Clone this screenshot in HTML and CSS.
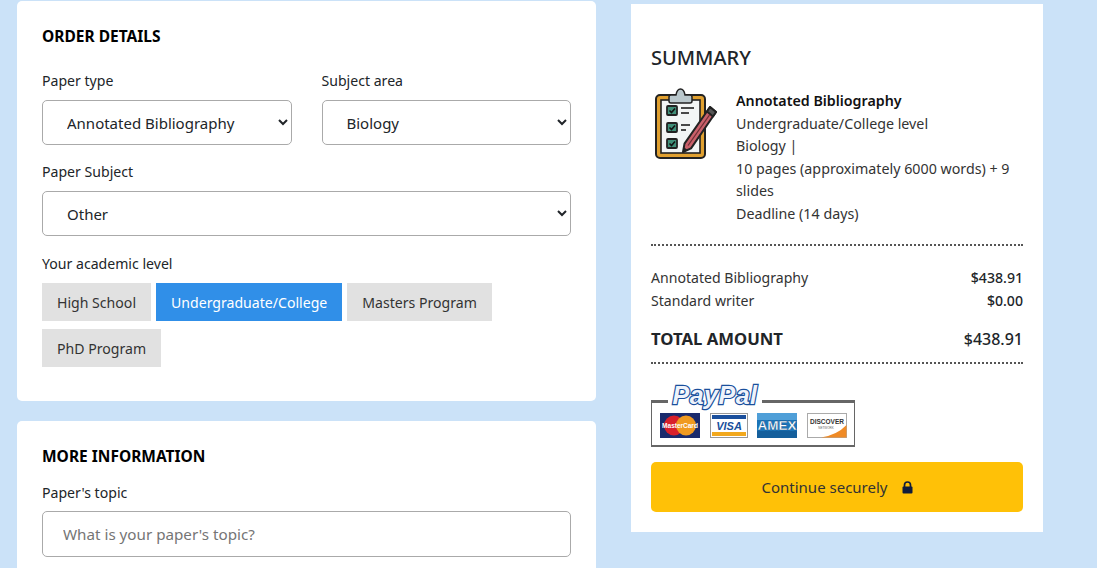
FILE: index.html
```html
<!DOCTYPE html>
<html lang="en">
<head>
<meta charset="utf-8">
<title>Order</title>
<link rel="stylesheet" href="styles.css">
</head>
<body>
<main class="page">
  <div class="left">
    <section class="card details">
      <h2 class="card-title">ORDER DETAILS</h2>
      <div class="row">
        <div class="field">
          <label class="label">Paper type</label>
          <select class="select"><option>Annotated Bibliography</option></select>
        </div>
        <div class="field">
          <label class="label">Subject area</label>
          <select class="select"><option>Biology</option></select>
        </div>
      </div>
      <div class="field subject">
        <label class="label">Paper Subject</label>
        <select class="select"><option>Other</option></select>
      </div>
      <div class="field">
        <span class="label">Your academic level</span>
        <div class="levels">
          <button class="level">High School</button>
          <button class="level active">Undergraduate/College</button>
          <button class="level">Masters Program</button>
          <button class="level">PhD Program</button>
        </div>
      </div>
    </section>
    <section class="card info">
      <h2 class="card-title">MORE INFORMATION</h2>
      <label class="label">Paper's topic</label>
      <input class="input" type="text" placeholder="What is your paper's topic?">
    </section>
  </div>
  <aside class="summary">
    <h2 class="summary-title">SUMMARY</h2>
    <div class="order">
      <svg class="clipboard" viewBox="0 0 66 72" width="66" height="72" aria-hidden="true">
        <rect x="2" y="7" width="49" height="63" rx="4" fill="#e0a030" stroke="#222" stroke-width="2"/>
        <rect x="7" y="12" width="39" height="53" fill="#f2f5f5" stroke="#222" stroke-width="1.6"/>
        <path d="M15 13 v-4 q0-2 2-2 h5 q1-6 4.500-6 q3.500 0 4.500 6 h5 q2 0 2 2 v4 q0 2-2 2 h-19 q-2 0-2-2z" fill="#b9c7cc" stroke="#222" stroke-width="1.5"/>
        <g fill="#3f8f78" stroke="#222" stroke-width="1.8">
          <rect x="13" y="18" width="10" height="9" rx="1"/>
          <rect x="13" y="35" width="10" height="9" rx="1"/>
          <rect x="13" y="51" width="10" height="9" rx="1"/>
        </g>
        <g fill="none" stroke="#111" stroke-width="1.6">
          <path d="M15.500 22.500l2 2 3.500-4M15.500 39.500l2 2 3.500-4M15.500 55.500l2 2 3.500-4"/>
          <path d="M27 20h13M27 25h8M27 37h9M27 42h5"/>
        </g>
        <path d="M56 19 L62 24 L37 60.400 L29 64 L30.500 55.600z" fill="#c9606a" stroke="#222" stroke-width="2" stroke-linejoin="round"/>
        <path d="M56 19 L62 24 L59 28.500 L53 23.500z" fill="#555" stroke="#222" stroke-width="2" stroke-linejoin="round"/>
        <path d="M55.500 27 L34 57.500" stroke="#6d2f36" stroke-width="1.300"/>
        <path d="M29 64l.7-5 3.800 3z" fill="#222"/>
      </svg>
      <div class="order-text">
        <strong>Annotated Bibliography</strong>
        <span>Undergraduate/College level</span>
        <span>Biology |</span>
        <span>10 pages (approximately 6000 words) + 9 slides</span>
        <span>Deadline (14 days)</span>
      </div>
    </div>
    <div class="prices">
      <div class="price"><span>Annotated Bibliography</span><b>$438.91</b></div>
      <div class="price"><span>Standard writer</span><b>$0.00</b></div>
    </div>
    <div class="total"><strong>TOTAL AMOUNT</strong><span>$438.91</span></div>
    <div class="paypal">
      <span class="pp-word">PayPal</span>
      <div class="pp-cards">
        <svg class="pp-card" width="40" height="25" viewBox="0 0 40 25" aria-hidden="true">
          <rect width="40" height="25" fill="#1a2a6c"/>
          <circle cx="14" cy="12.500" r="10" fill="#d8202a"/>
          <circle cx="26" cy="12.500" r="10" fill="#f09a20"/>
          <text x="20" y="15" font-size="6.500" font-weight="700" fill="#fff" text-anchor="middle" font-family="Liberation Sans">MasterCard</text>
        </svg>
        <svg class="pp-card" width="38" height="25" viewBox="0 0 38 25" aria-hidden="true">
          <rect x=".5" y=".5" width="37" height="24" fill="#fff" stroke="#999"/>
          <rect x="2" y="2" width="34" height="4" fill="#1a4f9c"/>
          <rect x="2" y="19" width="34" height="4" fill="#f2a81d"/>
          <text x="19" y="16.500" font-size="11" font-weight="700" font-style="italic" fill="#1a4f9c" text-anchor="middle" font-family="Liberation Sans">VISA</text>
        </svg>
        <svg class="pp-card" width="40" height="25" viewBox="0 0 40 25" aria-hidden="true">
          <rect width="40" height="25" fill="#1b74b8"/>
          <rect width="40" height="7" fill="#4f9fd8"/>
          <rect y="18" width="40" height="7" fill="#145f9c"/>
          <text x="20" y="17" font-size="13" font-weight="700" fill="#fff" stroke="#0e4a80" stroke-width=".3" text-anchor="middle" font-family="Liberation Sans" textLength="39" lengthAdjust="spacingAndGlyphs">AMEX</text>
        </svg>
        <svg class="pp-card" width="40" height="25" viewBox="0 0 40 25" aria-hidden="true">
          <rect x=".5" y=".5" width="39" height="24" fill="#fff" stroke="#aaa"/>
          <path d="M14 24.500 Q30 22 39.500 12 V24.500z" fill="#ef8a25"/>
          <text x="20" y="11" font-size="6.500" font-weight="700" fill="#333" text-anchor="middle" font-family="Liberation Sans">DISCOVER</text>
          <text x="19" y="15.500" font-size="3" fill="#666" text-anchor="middle" font-family="Liberation Sans">NETWORK</text>
        </svg>
      </div>
    </div>
    <button class="continue">Continue securely
      <svg class="lock" width="11" height="13" viewBox="0 0 11 13" aria-hidden="true">
        <path d="M2.500 6V4a3 3 0 0 1 6 0v2" fill="none" stroke="#101c3c" stroke-width="1.700"/>
        <rect x=".5" y="5.500" width="10" height="7" rx="1" fill="#101c3c"/>
      </svg>
    </button>
  </aside>
</main>
</body>
</html>
```

FILE: styles.css
```css
* { box-sizing: border-box; }
html, body { margin: 0; height: 568px; overflow: hidden; }
body { background: #cbe2f8; font-family: "Noto Sans", sans-serif; font-size: 14px; color: #212529; }
.page { display: flex; align-items: flex-start; padding-left: 17px; gap: 35px; height: 568px; overflow: hidden; }
.left { width: 579px; flex: none; display: flex; flex-direction: column; gap: 20px; padding-top: 1px; }
.card { background: #fff; border-radius: 5px; padding: 25px 25px 0; }
.details { height: 400px; }
.info { height: 160px; flex: none; }
.card-title { margin: 0 0 25px; font-size: 15.500px; line-height: 20px; font-weight: 700; color: #000; }
.row { display: flex; gap: 30px; }
.row .field { flex: 1; }
.field { margin-bottom: 17px; }
.subject { margin-bottom: 18px; }
.label { display: block; font-size: 14.100px; line-height: 20px; margin-bottom: 9px; color: #212529; }
.select { display: block; width: 100%; height: 45px; border: 1px solid #aaa; border-radius: 5px; background: #fff; padding: 0 20px; font: 15px "Noto Sans", sans-serif; color: #212529; }
.levels { display: flex; flex-wrap: wrap; gap: 8px 5px; }
.level { border: 0; background: #e1e1e1; height: 38px; padding: 0 15px; font: 14.100px "Noto Sans", sans-serif; color: #333; }
.level.active { background: #308fe8; color: #fff; }
.info .card-title { margin-bottom: 17px; }
.info .label { margin-bottom: 8px; }
.input { display: block; width: 100%; height: 46px; border: 1px solid #aaa; border-radius: 5px; padding: 0 20px; font: 15.200px "Noto Sans", sans-serif; }
.input::placeholder { color: #757575; }
.summary { width: 412px; flex: none; margin-top: 4px; height: 528px; background: #fff; padding: 40px 20px 0; }
.summary-title { margin: 0 0 18px; font-size: 20px; line-height: 28px; font-weight: 500; color: #212529; }
.order { display: flex; gap: 16px; padding-bottom: 19px; border-bottom: 2px dotted #555; }
.clipboard { flex: none; margin: -2px 0 0 3px; }
.order-text { font-size: 14.250px; line-height: 22.500px; display: flex; flex-direction: column; color: #333; }
.order-text strong { font-weight: 600; color: #111; }
.prices { padding-top: 20px; font-size: 14.100px; line-height: 23px; }
.price { display: flex; justify-content: space-between; color: #333; }
.price b { font-weight: 500; color: #212529; }
.total { display: flex; justify-content: space-between; align-items: center; margin-top: 15px; padding-bottom: 11px; border-bottom: 2px dotted #555; font-size: 16px; line-height: 24px; }
.total strong { font-weight: 700; font-size: 16.700px; }
.total span { font-weight: 500; }
.paypal { position: relative; width: 204px; height: 47px; margin-top: 36px; border: 2px solid #666; border-top-width: 3px; border-left-width: 1px; border-right-width: 1px; background: #fff; }
.pp-word { position: absolute; top: -20px; left: 16px; width: 94px; height: 24px; text-align: center; background: #fff; font: italic 700 25px/24px "Liberation Sans", sans-serif; color: #eef3fb; -webkit-text-stroke: 2.400px #1a4f9c; paint-order: stroke fill; letter-spacing: .5px; }
.pp-cards { display: flex; justify-content: space-between; padding: 10px 7px 0 8px; }
.pp-card { display: block; }
.continue { display: flex; align-items: center; justify-content: center; gap: 14px; width: 100%; height: 50px; margin-top: 15px; border: 0; border-radius: 5px; background: #ffc107; font: 15px "Noto Sans", sans-serif; color: #333; }
.lock { display: block; }
```
